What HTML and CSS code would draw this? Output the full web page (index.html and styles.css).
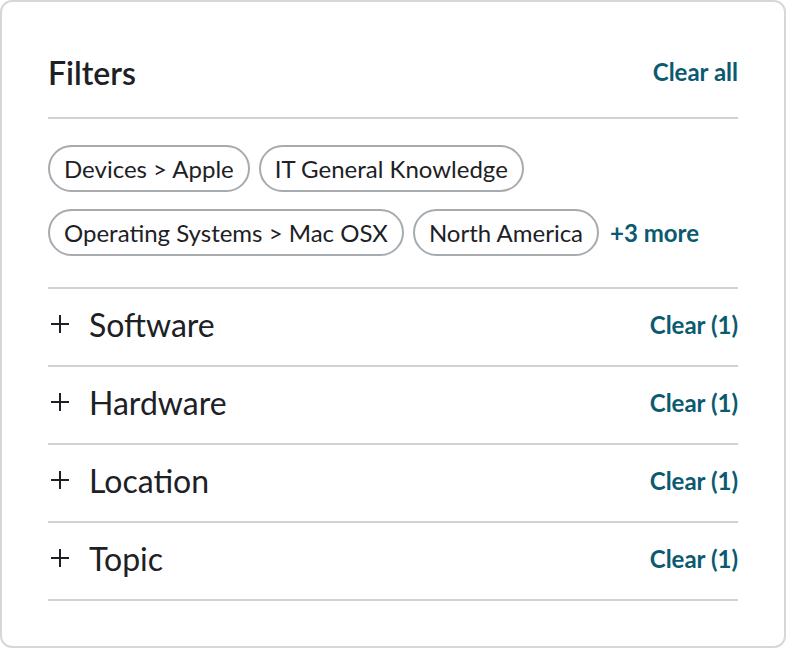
FILE: index.html
```html
<!DOCTYPE html>
<html lang="en">
<head>
<meta charset="utf-8">
<title>Filters</title>
<link rel="stylesheet" href="styles.css">
</head>
<body>
<section class="card">
  <header class="head">
    <h2 class="title">Filters</h2>
    <a class="link" href="#">Clear all</a>
  </header>
  <div class="chips">
    <span class="chip">Devices &gt; Apple</span>
    <span class="chip">IT General Knowledge</span>
    <span class="chip">Operating Systems &gt; Mac OSX</span>
    <span class="chip">North America</span>
    <a class="link more" href="#">+3 more</a>
  </div>
  <ul class="groups">
    <li class="group">
      <span class="toggle"><svg viewBox="0 0 18 18" width="18" height="18"><path d="M9 0v18M0 9h18" stroke="#1d2125" stroke-width="2" fill="none"/></svg></span>
      <span class="gname">Software</span>
      <a class="link" href="#">Clear (1)</a>
    </li>
    <li class="group">
      <span class="toggle"><svg viewBox="0 0 18 18" width="18" height="18"><path d="M9 0v18M0 9h18" stroke="#1d2125" stroke-width="2" fill="none"/></svg></span>
      <span class="gname">Hardware</span>
      <a class="link" href="#">Clear (1)</a>
    </li>
    <li class="group">
      <span class="toggle"><svg viewBox="0 0 18 18" width="18" height="18"><path d="M9 0v18M0 9h18" stroke="#1d2125" stroke-width="2" fill="none"/></svg></span>
      <span class="gname">Location</span>
      <a class="link" href="#">Clear (1)</a>
    </li>
    <li class="group">
      <span class="toggle"><svg viewBox="0 0 18 18" width="18" height="18"><path d="M9 0v18M0 9h18" stroke="#1d2125" stroke-width="2" fill="none"/></svg></span>
      <span class="gname">Topic</span>
      <a class="link" href="#">Clear (1)</a>
    </li>
  </ul>
</section>
</body>
</html>
```

FILE: styles.css
```css
html, body {
  margin: 0;
  padding: 0;
  background: #ffffff;
}
body {
  font-family: Lato, "Open Sans", sans-serif;
  color: #1d2125;
}
.card {
  box-sizing: border-box;
  width: 786px;
  height: 648px;
  border: 2px solid #d5d8db;
  border-radius: 12px;
  padding: 0 46px;
}
.head {
  display: flex;
  align-items: center;
  justify-content: space-between;
  box-sizing: border-box;
  height: 117px;
  padding-top: 26px;
  border-bottom: 2px solid #d0d3d6;
}
.title {
  margin: 0;
  font-size: 32px;
  font-weight: 600;
  line-height: 38px;
}
.head .link {
  margin-top: -2px;
}
.link {
  color: #0b5a71;
  font-weight: 700;
  font-size: 24px;
  text-decoration: none;
  white-space: nowrap;
}
.chips {
  display: flex;
  flex-wrap: wrap;
  align-items: center;
  column-gap: 9px;
  row-gap: 17px;
  padding: 26px 0 31px;
  border-bottom: 2px solid #d0d3d6;
}
.chip {
  box-sizing: border-box;
  height: 47px;
  display: inline-flex;
  align-items: center;
  padding: 0 14px;
  border: 2px solid #a5abaf;
  border-radius: 24px;
  font-size: 24px;
  white-space: nowrap;
}
.more {
  margin-left: 2px;
}
.groups {
  list-style: none;
  margin: 0;
  padding: 0;
}
.group {
  display: flex;
  align-items: center;
  height: 78px;
  box-sizing: border-box;
  border-bottom: 2px solid #d0d3d6;
  padding-bottom: 4px;
}
.group .link {
  margin-top: -2px;
}
.toggle {
  display: flex;
  width: 18px;
  height: 18px;
  margin-left: 3px;
  margin-top: -2px;
}
.gname {
  flex: 1;
  margin-left: 20px;
  font-size: 32px;
  line-height: 38px;
}
```
